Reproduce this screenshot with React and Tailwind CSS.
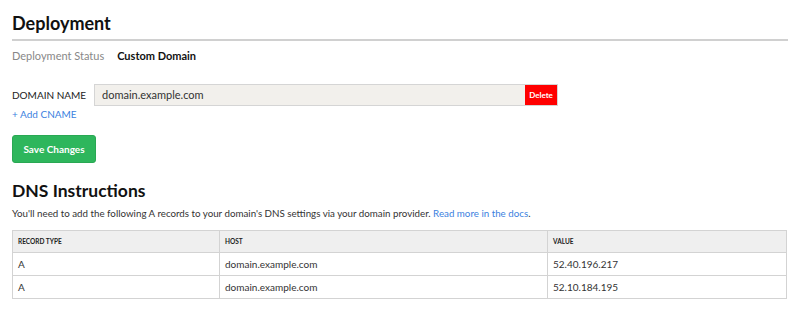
export default function App() {
  const records = [
    { type: 'A', host: 'domain.example.com', value: '52.40.196.217' },
    { type: 'A', host: 'domain.example.com', value: '52.10.184.195' },
  ];

  return (
    <div className="min-h-[331px] bg-white px-3 pt-[10px] text-[#222]" style={{ fontFamily: 'Lato, "Open Sans", sans-serif' }}>
      <h1 className="text-[18px] font-bold leading-[26px] text-[#111]">Deployment</h1>
      <div className="mt-[3px] h-[2px] bg-[#d0d0d0]" />

      <div className="mt-[7px] flex gap-[13px] text-[11px] leading-[16px]">
        <span className="text-[#888]">Deployment Status</span>
        <span className="font-bold text-[#111]">Custom Domain</span>
      </div>

      <div className="mt-[20px] flex items-center">
        <span className="w-[82px] text-[10px] uppercase text-[#222]">Domain Name</span>
        <div className="flex h-[22px] w-[464px] border border-[#d5d5d5] bg-[#f2f0ec]">
          <input
            className="flex-1 bg-transparent px-[7px] text-[11px] text-[#333] outline-none"
            defaultValue="domain.example.com"
          />
          <button className="w-[32px] bg-[#ff0000] text-[8px] font-bold text-white">Delete</button>
        </div>
      </div>
      <a href="#" className="block text-[10px] leading-[16px] text-[#3b7fe0]">+ Add CNAME</a>

      <button className="mt-[13px] h-[28px] w-[84px] rounded-[3px] border border-[#29a853] bg-[#2eb65c] text-[10px] font-bold text-white">
        Save Changes
      </button>

      <h2 className="mt-[17px] text-[17.5px] font-bold leading-[22px] text-[#111]">DNS Instructions</h2>
      <p className="mt-[4px] text-[9.75px] leading-[14px] text-[#333]">
        You'll need to add the following A records to your domain's DNS settings via your domain provider.{' '}
        <a href="#" className="text-[#3b7fe0]">Read more in the docs</a>.
      </p>

      <table className="mt-[10px] w-[775px] border-collapse text-[10px] text-[#333]">
        <thead>
          <tr className="bg-[#efefef]">
            <th className="h-[22px] w-[207px] border border-[#d3d3d3] px-[5px] text-left text-[6.5px] font-bold uppercase text-[#222]">Record Type</th>
            <th className="h-[22px] w-[328px] border border-[#d3d3d3] px-[5px] text-left text-[6.5px] font-bold uppercase text-[#222]">Host</th>
            <th className="h-[22px] border border-[#d3d3d3] px-[5px] text-left text-[6.5px] font-bold uppercase text-[#222]">Value</th>
          </tr>
        </thead>
        <tbody>
          {records.map((r, i) => (
            <tr key={i}>
              <td className="h-[23px] border border-[#d3d3d3] px-[5px]">{r.type}</td>
              <td className="h-[23px] border border-[#d3d3d3] px-[5px]">{r.host}</td>
              <td className="h-[23px] border border-[#d3d3d3] px-[5px]">{r.value}</td>
            </tr>
          ))}
        </tbody>
      </table>
    </div>
  );
}
